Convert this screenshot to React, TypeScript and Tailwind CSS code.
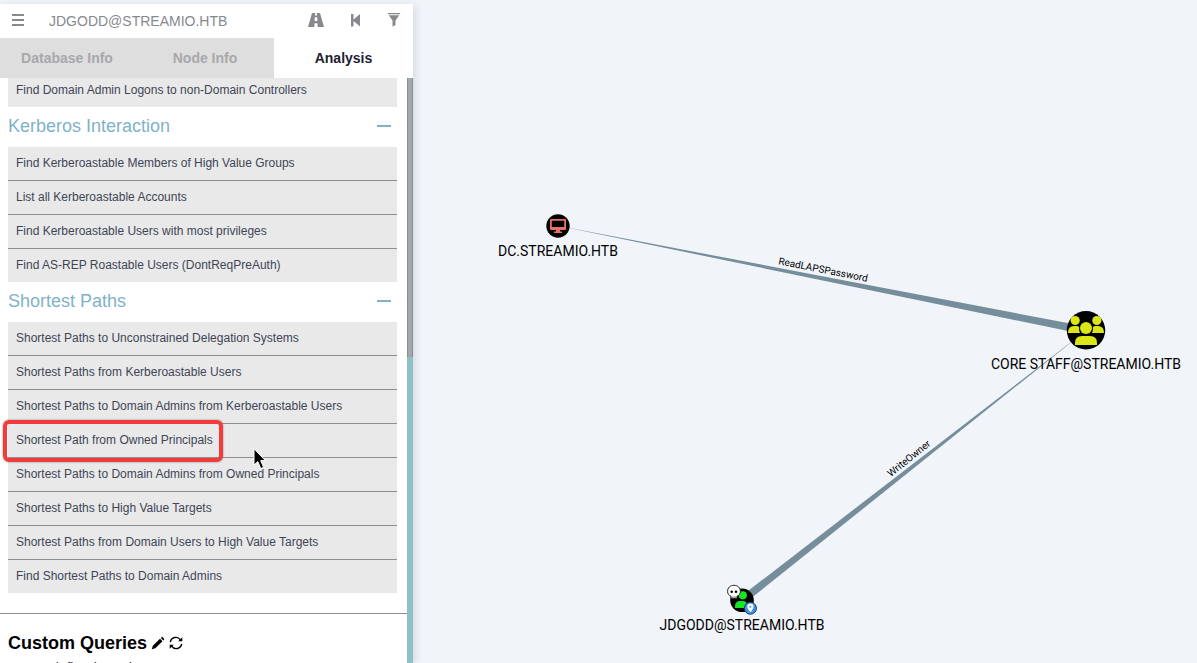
const kerberos = [
  "Find Kerberoastable Members of High Value Groups",
  "List all Kerberoastable Accounts",
  "Find Kerberoastable Users with most privileges",
  "Find AS-REP Roastable Users (DontReqPreAuth)",
];

const shortest = [
  "Shortest Paths to Unconstrained Delegation Systems",
  "Shortest Paths from Kerberoastable Users",
  "Shortest Paths to Domain Admins from Kerberoastable Users",
  "Shortest Path from Owned Principals",
  "Shortest Paths to Domain Admins from Owned Principals",
  "Shortest Paths to High Value Targets",
  "Shortest Paths from Domain Users to High Value Targets",
  "Find Shortest Paths to Domain Admins",
];

const HIGHLIGHTED = "Shortest Path from Owned Principals";

function QueryRow({ label }: { label: string }) {
  return (
    <li className="relative border-b border-[#8f8f8f] last:border-b-0">
      <button className="block h-[33px] w-full px-2 pb-0.5 text-left text-xs text-[#3f4555]">{label}</button>
      {label === HIGHLIGHTED && (
        <>
          <span className="pointer-events-none absolute -top-1 -left-[5px] h-[42px] w-[220px] rounded-md border-4 border-[#f23c3c] shadow-[0_0_2px_#777]" />
          <Cursor />
        </>
      )}
    </li>
  );
}

function Cursor() {
  return (
    <svg className="pointer-events-none absolute top-6 left-[245px] z-10" width="14" height="22" viewBox="0 0 14 22" aria-hidden="true">
      <path d="M1 0.8V17L4.8 13.6L7.8 20.6L10.6 19.3L7.7 12.6H12.4Z" fill="#000" stroke="#fff" strokeWidth="1" />
    </svg>
  );
}

function Section({ title, items }: { title: string; items: string[] }) {
  return (
    <section>
      <h4 className="flex h-10 items-center justify-between pr-1.5 pb-0.5 text-lg text-[#7fb2c9]">
        {title}
        <button aria-label={`Collapse ${title}`} className="flex h-5 items-center">
          <span className="block h-0.5 w-[14px] bg-[#7fb2c9]" />
        </button>
      </h4>
      <ul className="bg-[#e9e9e9]">
        {items.map((item) => (
          <QueryRow key={item} label={item} />
        ))}
      </ul>
    </section>
  );
}

function Sidebar() {
  return (
    <aside className="z-10 mt-1 flex w-[413px] flex-none flex-col bg-white shadow-[2px_2px_8px_rgba(90,100,120,0.2)]">
      <header className="flex h-[34px] flex-none items-center px-3 text-[#87898f]">
        <button aria-label="Menu" className="flex w-[37px] flex-col gap-0.5 pb-0.5">
          <span className="h-0.5 w-3 bg-current" />
          <span className="mt-px h-0.5 w-3 bg-current" />
          <span className="mt-px h-0.5 w-3 bg-current" />
        </button>
        <input
          aria-label="Search for a node"
          defaultValue="JDGODD@STREAMIO.HTB"
          className="min-w-0 flex-1 bg-transparent text-sm outline-none"
        />
        <div className="flex items-center gap-[25px] pb-0.5">
          <button aria-label="Pathfinding">
            <svg width="18" height="16" viewBox="0 0 18 16" fill="currentColor" aria-hidden="true">
              <path d="M5 1H8.2L8 3.6H10L9.8 1H13L17 15H10.7L10.4 11.2H7.6L7.3 15H1ZM7.8 5.2L7.6 9H10.4L10.2 5.2Z" fillRule="evenodd" />
            </svg>
          </button>
          <button aria-label="Back">
            <svg width="12" height="16" viewBox="0 0 12 16" fill="currentColor" aria-hidden="true">
              <path d="M1 2H3.5V7.5L10 2V14.5L3.5 9V14.5H1Z" />
            </svg>
          </button>
          <button aria-label="Filter">
            <svg width="14" height="16" viewBox="0 0 14 16" fill="currentColor" aria-hidden="true">
              <path d="M1 1H13V2.2H1ZM1.8 3.2H12.2L8.5 8.5V13L5.5 14.8V8.5Z" />
            </svg>
          </button>
        </div>
      </header>
      <nav className="flex h-10 flex-none text-sm font-bold">
        <button className="w-[134px] bg-[#dedede] text-[#a7a8ab]">Database Info</button>
        <button className="w-[140px] bg-[#dedede] pl-0.5 text-[#a7a8ab]">Node Info</button>
        <button className="flex-1 text-[#1d2233]">Analysis</button>
      </nav>
      <div className="flex min-h-0 flex-1">
        <div className="min-w-0 flex-1 overflow-hidden">
          <div className="pr-2.5 pl-2">
            <ul className="h-[29px] bg-[#e9e9e9]">
              <li>
                <button className="block h-6 px-2 text-xs text-[#3f4555]">
                  Find Domain Admin Logons to non-Domain Controllers
                </button>
              </li>
            </ul>
            <Section title="Kerberos Interaction" items={kerberos} />
            <Section title="Shortest Paths" items={shortest} />
          </div>
          <div className="mt-5 border-t border-[#8f8f8f] px-2 pt-[15px]">
            <h3 className="flex h-7 items-center text-lg font-bold text-black">
              Custom Queries
              <button aria-label="Edit queries" className="ml-1">
                <svg width="14" height="14" viewBox="0 0 14 14" aria-hidden="true">
                  <path d="M0.8 13.2L1.8 9.7L9 2.7L11.5 5.2L4.3 12.3ZM9.8 1.9L11.2 0.7L13.4 2.9L12.2 4.4Z" />
                </svg>
              </button>
              <button aria-label="Refresh queries" className="ml-1">
                <svg width="14" height="14" viewBox="0 0 14 14" fill="none" stroke="#000" strokeWidth="1.4" aria-hidden="true">
                  <path d="M1.3 6A5.6 5.6 0 0 1 11.4 3.8M12.7 8A5.6 5.6 0 0 1 2.6 10.2" />
                  <path d="M13.3 1.2V5.3H9.2ZM0.7 12.8V8.7H4.8Z" fill="#000" stroke="none" />
                </svg>
              </button>
            </h3>
            <p className="-ml-2.5 pt-px text-sm text-[#333]">No user defined queries.</p>
          </div>
        </div>
        <div className="flex w-1.5 flex-none flex-col bg-[#90bfc4]">
          <span className="h-[279px] border-x border-[#898d92] bg-[#a4a8ad]" />
        </div>
      </div>
    </aside>
  );
}

function Graph() {
  return (
    <main className="min-w-0 flex-1">
      <svg viewBox="413 0 784 663" className="h-full w-full font-['Roboto',sans-serif]" role="img" aria-label="Attack path graph">
        <g fill="#768e9b">
          <path d="M558 225.8L1086 326.5L1085 334.5Z" />
          <path d="M1086 330.5L744.5 603.5L739.5 597.5Z" />
        </g>
        <g textAnchor="middle" fontSize="14" fill="#000">
          <text x="558" y="256">DC.STREAMIO.HTB</text>
          <text x="1086" y="369">CORE STAFF@STREAMIO.HTB</text>
          <text x="742" y="630">JDGODD@STREAMIO.HTB</text>
        </g>
        <g textAnchor="middle" fontSize="10" fill="#000">
          <text transform="translate(822.5 273) rotate(11.2)">ReadLAPSPassword</text>
          <text transform="translate(911 461) rotate(-38.6)">WriteOwner</text>
        </g>

        <circle cx="558" cy="226" r="11.7" />
        <path
          d="M551 219H565Q566 219 566 220V229Q566 230 565 230H560V231.5H562V233H554V231.5H556V230H551Q550 230 550 229V220Q550 219 551 219ZM551.8 220.8V227H564.2V220.8Z"
          fill="#e8706c"
          fillRule="evenodd"
        />

        <circle cx="1086" cy="330.3" r="19.2" />
        <g fill="#dbe616">
          <circle cx="1075.2" cy="320.5" r="4.6" />
          <circle cx="1096.8" cy="320.5" r="4.6" />
          <path d="M1068 333Q1068 326 1074 326H1077Q1079 326 1079.2 327.5Q1078.5 330 1080 333ZM1104 333Q1104 326 1098 326H1095Q1093 326 1092.8 327.5Q1093.5 330 1092 333Z" />
          <circle cx="1086" cy="328" r="6" />
          <path d="M1075 345V343Q1075 336 1082 336H1090Q1097 336 1097 343V345Z" />
        </g>

        <circle cx="742" cy="600.3" r="11.8" />
        <g fill="#17e625">
          <circle cx="742.8" cy="595.3" r="4.1" />
          <path d="M735 608V606.5Q735 601 740 601H743Q747 601 747 606V608Z" />
        </g>
        <g>
          <path d="M734 585.3C730 585.3 727.6 588 727.6 591.3C727.6 594 729 595.5 731 596.2V598.3H737V596.2C739 595.5 740.4 594 740.4 591.3C740.4 588 738 585.3 734 585.3Z" fill="#fff" stroke="#222" strokeWidth="1" />
          <circle cx="731.7" cy="591.8" r="1.3" />
          <circle cx="736" cy="591.8" r="1.3" />
          <path d="M733 596V598M735 596V598" stroke="#555" strokeWidth="0.7" />
        </g>
        <circle cx="750.4" cy="608.2" r="6" fill="#3d93ee" stroke="#173a5e" strokeWidth="1" />
        <path d="M750.4 612.6C749.5 610.5 747.3 609 747.3 606.7A3.1 3.1 0 0 1 753.5 606.7C753.5 609 751.3 610.5 750.4 612.6Z" fill="#fff" />
        <circle cx="750.4" cy="606.7" r="1" fill="#3d93ee" />
      </svg>
    </main>
  );
}

export default function App() {
  return (
    <div className="flex h-screen overflow-hidden bg-[#f1f5fa] font-['Liberation_Sans',Arial,sans-serif]">
      <Sidebar />
      <Graph />
    </div>
  );
}
